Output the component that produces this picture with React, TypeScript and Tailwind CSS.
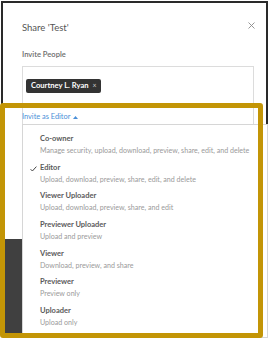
const roles = [
  { label: "Co-owner", text: "Manage security, upload, download, preview, share, edit, and delete" },
  { label: "Editor", text: "Upload, download, preview, share, edit, and delete", checked: true },
  { label: "Viewer Uploader", text: "Upload, download, preview, share, and edit" },
  { label: "Previewer Uploader", text: "Upload and preview" },
  { label: "Viewer", text: "Download, preview, and share" },
  { label: "Previewer", text: "Preview only" },
  { label: "Uploader", text: "Upload only" },
];

const App = () => {
  return (
    <div className="relative w-[271px] h-[340px] overflow-hidden bg-white font-['Lato',sans-serif]">
      {/* modal */}
      <div className="ml-px mt-px w-[267px] h-[336px] border-2 border-[#2a2a2a] flex flex-col">
        <div className="h-[236px] bg-white pl-[19px] pr-[10px] pt-[18px]">
          <div className="flex items-start justify-between">
            <p className="text-[9.5px] leading-[14px] text-[#555]">Share 'Test'</p>
            <svg className="mt-[1px] mr-[1px]" width="7" height="7" viewBox="0 0 7 7">
              <path d="M0.5 0.5 L6.5 6.5 M6.5 0.5 L0.5 6.5" stroke="#8a8a8a" strokeWidth="0.9" />
            </svg>
          </div>
          <p className="mt-[13px] text-[7.6px] leading-[12px] font-semibold text-[#6b6b6b]">Invite People</p>
          <div className="mt-[6px] w-[232px] h-[60px] border border-[#dcdcdc] p-[3px]">
            <span className="inline-flex items-center gap-[4px] h-[14px] pl-[5px] pr-[4px] rounded-[2px] bg-[#333] text-white text-[7.6px] font-bold">
              Courtney L. Ryan
              <span className="text-[7px] font-normal text-[#ccc]">×</span>
            </span>
          </div>
        </div>
        <div className="flex-1 bg-[#404040]" />
      </div>

      {/* "Invite as" link and role menu */}
      <div className="absolute left-[22px] top-[111px] flex items-center gap-[3px] text-[7.4px] leading-[12px] text-[#4a8fd8]">
        Invite as Editor
        <svg width="5" height="3" viewBox="0 0 5 3">
          <path d="M0 3 L2.5 0 L5 3 Z" fill="#4a8fd8" />
        </svg>
      </div>
      <div className="absolute left-[22px] top-[124px] w-[246px] h-[214px] bg-white border border-[#d6d6d6] pt-[8px]">
        {roles.map((r) => (
          <div key={r.label} className="relative h-[28.67px] pl-[17px]">
            {r.checked && (
              <svg className="absolute left-[7px] top-[4px]" width="7" height="6" viewBox="0 0 7 6">
                <path d="M0.6 3.2 L2.4 5 L6.4 0.6" fill="none" stroke="#444" strokeWidth="1" />
              </svg>
            )}
            <p className="text-[7.5px] leading-[12px] font-bold text-[#5a5a5a]">{r.label}</p>
            <p className="text-[7.1px] leading-[12px] text-[#9a9a9a] whitespace-nowrap">{r.text}</p>
          </div>
        ))}
      </div>

      {/* highlight frame */}
      <div className="absolute left-0 top-[103px] w-[263px] h-[235px] border-[5px] border-[#c39506] rounded-[3px] pointer-events-none" />
    </div>
  );
};

export default App;
